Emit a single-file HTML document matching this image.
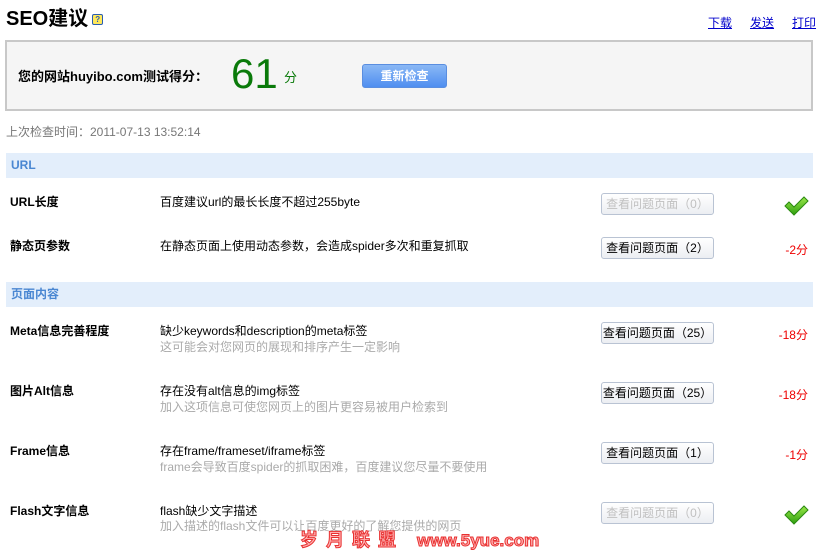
<!DOCTYPE html>
<html><head><meta charset="utf-8"><style>
*{margin:0;padding:0;box-sizing:border-box}
body{width:817px;height:547px;overflow:hidden;background:#fff;font-family:"Liberation Sans","Noto Sans CJK SC",sans-serif;font-size:12px;color:#000;position:relative}
.a{position:absolute;white-space:nowrap}
.h1{left:6px;top:6px;font-size:20px;font-weight:bold;line-height:26px}
.q{display:inline-block;width:11px;height:11px;border:1px solid #2a5db0;background:#ffe85a;font-size:8px;line-height:9px;text-align:center;color:#2a5db0;vertical-align:3px;margin-left:4px;font-weight:bold;border-radius:2px}
.lnk{top:14px;color:#00c;text-decoration:underline;font-size:12px}
.box{left:5px;top:40px;width:808px;height:71px;border:2px solid #c8c8c8;background:#f5f5f5}
.bar{left:6px;width:807px;height:25px;background:#e3eefb;color:#4a87d2;font-weight:bold;padding-left:5px;line-height:25px}
.lab{left:10px;font-weight:bold}
.d{left:160px}
.g{left:160px;color:#aaa}
.btn{left:601px;width:113px;height:22px;border:1px solid #b9c3d3;border-radius:3px;background:linear-gradient(#fff,#eceef2);text-align:center;line-height:20px;font-size:12px}
.dis{color:#c0c0c0}
.s{right:9px;color:#e00}
</style></head><body>
<div class="a h1">SEO建议<span class="q">?</span></div>
<div class="a lnk" style="left:708px">下载</div>
<div class="a lnk" style="left:750px">发送</div>
<div class="a lnk" style="left:792px">打印</div>
<div class="a box"></div>
<div class="a" style="left:18px;top:66px;font-size:13px;font-weight:bold">您的网站huyibo.com测试得分：</div>
<div class="a" style="left:231px;top:50px;font-size:42px;color:#0a7a0a;line-height:48px">61</div>
<div class="a" style="left:284px;top:67px;color:#0a7a0a;font-size:13px">分</div>
<div class="a" style="left:362px;top:64px;width:85px;height:24px;border-radius:3px;background:linear-gradient(#8ab8f5,#4f8ef0);border:1px solid #5a8ee0;color:#fff;font-weight:bold;text-align:center;line-height:22px">重新检查</div>
<div class="a" style="left:6px;top:123px;color:#777">上次检查时间：2011-07-13 13:52:14</div>

<div class="a bar" style="top:153px">URL</div>
<div class="a lab" style="top:193px">URL长度</div>
<div class="a d" style="top:193px">百度建议url的最长长度不超过255byte</div>
<div class="a btn dis" style="top:193px">查看问题页面（0）</div>
<svg class="a" style="left:784px;top:196px" width="25" height="20" viewBox="0 0 25 20"><defs><linearGradient id="gc" x1="0" y1="0" x2="0" y2="1"><stop offset="0" stop-color="#9be84a"/><stop offset="1" stop-color="#2fa010"/></linearGradient></defs><path d="M1 10 L5 6 L10 11 L20 1 L24 5 L10 19 Z" fill="url(#gc)" stroke="#2a8a10" stroke-width="1"/></svg>
<div class="a lab" style="top:237px">静态页参数</div>
<div class="a d" style="top:237px">在静态页面上使用动态参数，会造成spider多次和重复抓取</div>
<div class="a btn" style="top:237px">查看问题页面（2）</div>
<div class="a s" style="top:241px">-2分</div>

<div class="a bar" style="top:282px">页面内容</div>
<div class="a lab" style="top:322px">Meta信息完善程度</div>
<div class="a d" style="top:322px">缺少keywords和description的meta标签</div>
<div class="a g" style="top:338px">这可能会对您网页的展现和排序产生一定影响</div>
<div class="a btn" style="top:322px">查看问题页面（25）</div>
<div class="a s" style="top:326px">-18分</div>

<div class="a lab" style="top:382px">图片Alt信息</div>
<div class="a d" style="top:382px">存在没有alt信息的img标签</div>
<div class="a g" style="top:398px">加入这项信息可使您网页上的图片更容易被用户检索到</div>
<div class="a btn" style="top:382px">查看问题页面（25）</div>
<div class="a s" style="top:386px">-18分</div>

<div class="a lab" style="top:442px">Frame信息</div>
<div class="a d" style="top:442px">存在frame/frameset/iframe标签</div>
<div class="a g" style="top:458px">frame会导致百度spider的抓取困难，百度建议您尽量不要使用</div>
<div class="a btn" style="top:442px">查看问题页面（1）</div>
<div class="a s" style="top:446px">-1分</div>

<div class="a lab" style="top:502px">Flash文字信息</div>
<div class="a d" style="top:502px">flash缺少文字描述</div>
<div class="a g" style="top:517px">加入描述的flash文件可以让百度更好的了解您提供的网页</div>
<div class="a btn dis" style="top:502px">查看问题页面（0）</div>
<svg class="a" style="left:784px;top:505px" width="25" height="20" viewBox="0 0 25 20"><path d="M1 10 L5 6 L10 11 L20 1 L24 5 L10 19 Z" fill="url(#gc)" stroke="#2a8a10" stroke-width="1"/></svg>
<div class="a" style="left:300px;top:526px;color:#ffb0b0;font-size:18px;font-weight:bold;letter-spacing:8px;-webkit-text-stroke:1px #e83030">岁月联盟 <span style="letter-spacing:0;font-size:17px">www.5yue.com</span></div>
</body></html>
